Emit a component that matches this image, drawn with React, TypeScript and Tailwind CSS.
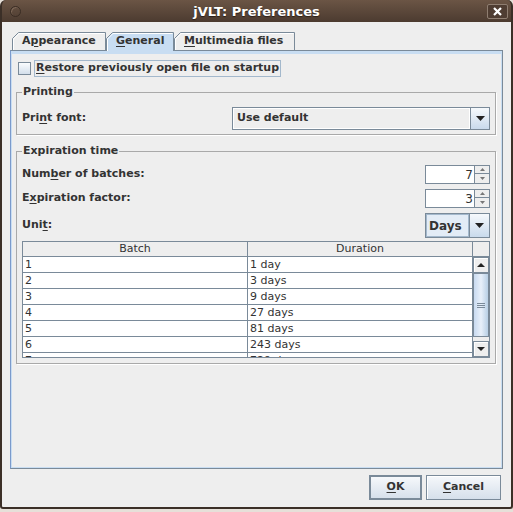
import React from 'react';

const Mn = ({ children }: { children: React.ReactNode }) => (
    <u className="underline decoration-1 underline-offset-[2px]">{children}</u>
);

const DownTri = ({ w = 9, h = 5 }: { w?: number; h?: number }) => (
    <svg width={w} height={h} viewBox={`0 0 ${w} ${h}`}>
        <polygon points={`0,0 ${w},0 ${w / 2},${h}`} fill="#222" />
    </svg>
);

const UpTri = ({ w = 9, h = 5 }: { w?: number; h?: number }) => (
    <svg width={w} height={h} viewBox={`0 0 ${w} ${h}`}>
        <polygon points={`0,${h} ${w},${h} ${w / 2},0`} fill="#222" />
    </svg>
);

type TabProps = { w: number; selected?: boolean; className: string; children: React.ReactNode };

const Tab = ({ w, selected, className, children }: TabProps) => {
    const h = selected ? 19 : 18;
    return (
        <div className={`relative ${className} ${selected ? 'z-10 h-[19px]' : 'h-[18px]'}`}>
            <svg width={w} height={h} className="absolute inset-0">
                <path
                    d={`M0.5,${h} L0.5,6.5 L6.5,0.5 L${w - 0.5},0.5 L${w - 0.5},${h}`}
                    fill={selected ? '#c8ddf2' : '#eeeeee'}
                    stroke="#7a8a99"
                />
                <path d={`M1.5,${h} L1.5,7 L7,1.5 L${w - 1.5},1.5`} fill="none" stroke="#ffffff" />
            </svg>
            <div className="relative flex h-[18px] items-center pl-[10px] text-[11px] font-bold text-[#333]">
                {children}
            </div>
        </div>
    );
};

const Spinner = ({ value }: { value: string }) => (
    <div className="flex h-[19px] w-[65px]">
        <div className="flex h-full w-[49px] items-center justify-end border border-r-0 border-[#7a8a99] bg-white pr-[1px] text-[12px] text-[#333]">
            {value}
        </div>
        <div className="flex h-full w-[16px] flex-col">
            <div className="flex h-[9px] items-center justify-center border border-[#7a8a99] bg-[#eeeeee]">
                <svg width="5" height="3"><polygon points="0,3 5,3 2.5,0" fill="#777" /></svg>
            </div>
            <div className="flex h-[10px] items-center justify-center border border-t-0 border-[#7a8a99] bg-[#eeeeee]">
                <svg width="5" height="3"><polygon points="0,0 5,0 2.5,3" fill="#777" /></svg>
            </div>
        </div>
    </div>
);

const rows = [
    ['1', '1 day'],
    ['2', '3 days'],
    ['3', '9 days'],
    ['4', '27 days'],
    ['5', '81 days'],
    ['6', '243 days'],
    ['7', '729 days'],
];

const App: React.FC = () => {
    return (
        <div className="h-[512px] w-[513px] bg-[#e6e0d9] font-['DejaVu_Sans',sans-serif]">
            <div className="flex h-[509px] w-[513px] flex-col overflow-hidden rounded-t-[6px] rounded-b-[3px] border-x-2 border-b-2 border-[#3b2f27] bg-[#3b2f27]">
                {/* title bar */}
                <div className="flex h-[22px] shrink-0 items-center bg-gradient-to-b from-[#6b5545] to-[#4c3b30]">
                    <div className="flex w-[30px] pl-[8px]">
                        <span className="h-[11px] w-[11px] rounded-full border border-[#3a2d24] shadow-[inset_1px_1px_0_#7e6858]" />
                    </div>
                    <div className="flex-1 pt-px text-center text-[13px] font-bold leading-[22px] text-white [text-shadow:0_1px_1px_#2a1f18]">
                        jVLT: Preferences
                    </div>
                    <div className="flex w-[30px] justify-end pr-[3px]">
                        <div className="flex h-[15px] w-[21px] items-center justify-center rounded-[2px] border border-[#8f7e71] bg-[#4f3d32]">
                            <svg width="9" height="9" viewBox="0 0 9 9">
                                <path d="M1,1 L8,8 M8,1 L1,8" stroke="#fff" strokeWidth="2.2" />
                            </svg>
                        </div>
                    </div>
                </div>

                {/* body */}
                <div className="flex flex-1 flex-col bg-[#eeeeee]">
                    <div className="mt-[10px] flex h-[18px] pl-[10px]">
                        <Tab w={94} className="w-[94px]">
                            <span>A<Mn>p</Mn>pearance</span>
                        </Tab>
                        <Tab w={68} selected className="w-[68px]">
                            <span><Mn>G</Mn>eneral</span>
                        </Tab>
                        <Tab w={121} className="w-[121px]">
                            <span><Mn>M</Mn>ultimedia files</span>
                        </Tab>
                    </div>

                    {/* tab panel */}
                    <div className="ml-[8px] h-[419px] w-[493px] border border-[#7a8a99] border-l-[#7b9acb] border-t-[#7a8a99]">
                        <div className="flex h-full flex-col border border-t-[3px] border-[#c8ddf2] pl-[4px] text-[11px] text-[#333]">
                            <div className="ml-[2px] mt-[6px] flex h-[17px] items-center gap-[3px]">
                                <span className="h-[13px] w-[13px] border border-[#7a8a99] bg-gradient-to-b from-[#fafcfe] to-[#d3dfeb]" />
                                <span className="flex h-[17px] items-center border border-[#a3b8cc] px-[1px] font-bold">
                                    <span><Mn>R</Mn>estore previously open file on startup</span>
                                </span>
                            </div>

                            <fieldset className="mt-[9px] w-[480px] border border-[#a9a9a9] px-[5px] pb-[4px] pt-[9px] shadow-[1px_1px_0_#fff]">
                                <legend className="px-[1px] text-[11px] font-bold leading-[12px]">Printing</legend>
                                <div className="flex h-[23px] items-center justify-between">
                                    <span className="font-bold">Pri<Mn>n</Mn>t font:</span>
                                    <div className="flex h-[23px] w-[258px] border border-[#7a8a99]">
                                        <div className="flex flex-1 items-center border border-[#fff] bg-[#eeeeee] pl-[3px] font-bold">
                                            Use default
                                        </div>
                                        <div className="flex w-[19px] items-center justify-center border-l border-[#7a8a99] bg-gradient-to-b from-[#f6f9fc] to-[#c9daec]">
                                            <DownTri />
                                        </div>
                                    </div>
                                </div>
                            </fieldset>

                            <fieldset className="mt-[10px] w-[480px] border border-[#a9a9a9] px-[5px] pb-[5px] pt-[8px] shadow-[1px_1px_0_#fff]">
                                <legend className="px-[1px] text-[11px] font-bold leading-[12px]">Expiration time</legend>
                                <div className="flex h-[19px] items-center justify-between">
                                    <span className="font-bold">Num<Mn>b</Mn>er of batches:</span>
                                    <Spinner value="7" />
                                </div>
                                <div className="mt-[5px] flex h-[19px] items-center justify-between">
                                    <span className="font-bold">E<Mn>x</Mn>piration factor:</span>
                                    <Spinner value="3" />
                                </div>
                                <div className="mt-[5px] flex h-[25px] items-center justify-between">
                                    <span className="font-bold">Uni<Mn>t</Mn>:</span>
                                    <div className="flex h-[25px] w-[65px] border border-[#7a8a99]">
                                        <div className="flex flex-1 items-center border border-[#a3b8cc] bg-[#e3ecf6] pl-[2px] text-[12px] font-bold">
                                            Days
                                        </div>
                                        <div className="flex w-[20px] items-center justify-center border-l border-[#7a8a99] bg-gradient-to-b from-[#f6f9fc] to-[#c9daec]">
                                            <DownTri />
                                        </div>
                                    </div>
                                </div>

                                {/* table */}
                                <div className="mt-[3px] flex h-[117px] w-[468px] flex-col border border-[#7a8a99]">
                                    <div className="flex h-[15px] shrink-0 border-b border-[#7a8a99] bg-[#eeeeee] leading-[14px]">
                                        <div className="w-[225px] border-r border-[#7a8a99] text-center">Batch</div>
                                        <div className="w-[225px] border-r border-[#7a8a99] text-center">Duration</div>
                                        <div className="w-[16px]" />
                                    </div>
                                    <div className="flex flex-1 overflow-hidden">
                                        <div className="w-[450px] overflow-hidden bg-white">
                                            {rows.map(([b, d]) => (
                                                <div key={b} className="flex h-[16px] border-b border-[#7a8a99] leading-[15px]">
                                                    <div className="w-[225px] border-r border-[#7a8a99] pl-[2px]">{b}</div>
                                                    <div className="w-[225px] border-r border-[#7a8a99] pl-[2px]">{d}</div>
                                                </div>
                                            ))}
                                        </div>
                                        <div className="flex w-[16px] flex-col bg-[#eeeeee]">
                                            <div className="flex h-[16px] items-center justify-center border border-[#7a8a99] bg-[#eeeeee] shadow-[inset_1px_1px_0_#fff]">
                                                <UpTri w={8} h={4} />
                                            </div>
                                            <div className="flex-1">
                                                <div className="flex h-[64px] items-center justify-center border border-[#7a8a99] bg-gradient-to-r from-[#c8daf0] via-[#e8f0fa] to-[#b8cfe5]">
                                                    <svg width="8" height="5" viewBox="0 0 8 5">
                                                        <path d="M0,0.5 H8 M0,2.5 H8 M0,4.5 H8" stroke="#7a8a99" strokeWidth="1" />
                                                    </svg>
                                                </div>
                                            </div>
                                            <div className="flex h-[16px] items-center justify-center border border-[#7a8a99] bg-[#eeeeee] shadow-[inset_1px_1px_0_#fff]">
                                                <DownTri w={8} h={4} />
                                            </div>
                                        </div>
                                    </div>
                                </div>
                            </fieldset>
                        </div>
                    </div>

                    {/* buttons */}
                    <div className="mt-[6px] flex justify-end gap-[4px] pr-[10px] text-[11px] font-bold text-[#333]">
                        <button className="flex h-[25px] w-[53px] items-center justify-center border-2 border-[#7a8a99] bg-gradient-to-b from-[#f6f8fb] to-[#d6e0eb]">
                            <span><Mn>O</Mn>K</span>
                        </button>
                        <button className="flex h-[25px] w-[75px] items-center justify-center border border-[#7a8a99] bg-gradient-to-b from-[#f6f8fb] to-[#d6e0eb] shadow-[inset_1px_1px_0_#fff]">
                            <span><Mn>C</Mn>ancel</span>
                        </button>
                    </div>
                </div>
            </div>
        </div>
    );
};

export default App;
